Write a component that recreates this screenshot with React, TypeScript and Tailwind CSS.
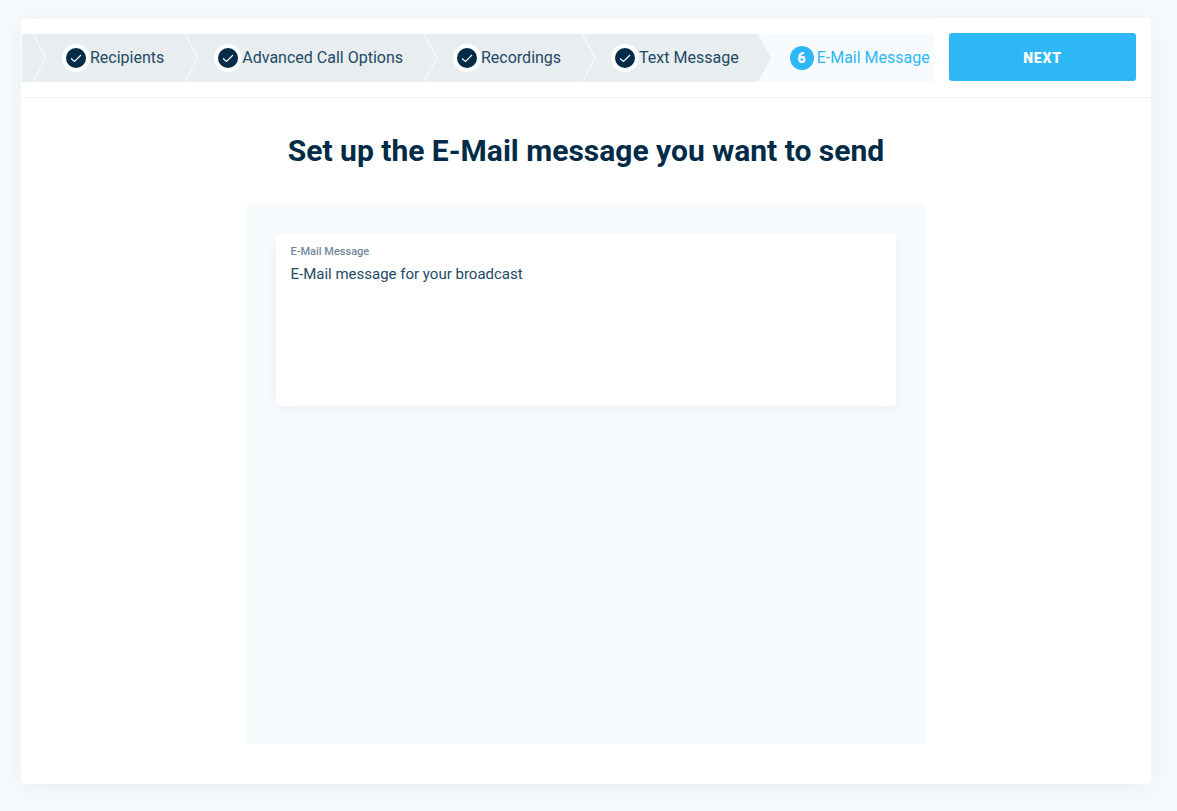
const Chevron = ({ last = false }: { last?: boolean }) => {
  if (last) {
    return (
      <svg width="13" height="48" viewBox="0 0 13 48" className="shrink-0 bg-[#f7fbfe]">
        <polygon points="0,0 13,24 0,48" fill="#e8edf0" />
      </svg>
    );
  }
  return (
    <svg width="13" height="48" viewBox="0 0 13 48" className="shrink-0">
      <polyline points="0,0 13,24 0,48" fill="none" stroke="#ffffff" strokeWidth="1" opacity="0.9" />
    </svg>
  );
};

const DoneStep = ({ label, pr }: { label: string; pr: string }) => {
  return (
    <div className={`flex items-center pl-4 ${pr}`}>
      <span className="flex h-7 w-7 shrink-0 items-center justify-center rounded-full border-4 border-white bg-[#012b47]">
        <svg width="12" height="12" viewBox="0 0 12 12" fill="none">
          <path d="M1 6.5 4.5 9.5 11 3" stroke="#ffffff" strokeWidth="1.2" />
        </svg>
      </span>
      <span className="whitespace-nowrap text-base text-[#234a66]">{label}</span>
    </div>
  );
};

const App = () => {
  return (
    <div className="h-[811px] overflow-hidden bg-[#f6fafd] pl-[21px] pt-[19px] font-['Roboto',sans-serif]">
      <div className="h-[765px] w-[1130px] rounded-b-[5px] bg-white shadow-[0_4px_24px_rgba(0,43,71,0.06)]">
        <header className="ml-px flex h-[79px] items-start border-b border-[#f0f3f5]">
          <div className="mt-[15px] flex h-12 w-[912px] shrink-0 items-stretch overflow-hidden bg-[#e8edf0]">
            <div className="w-[11px] shrink-0" />
            <Chevron />
            <DoneStep label="Recipients" pr="pr-[21px]" />
            <Chevron />
            <DoneStep label="Advanced Call Options" pr="pr-[21px]" />
            <Chevron />
            <DoneStep label="Recordings" pr="pr-[21px]" />
            <Chevron />
            <DoneStep label="Text Message" pr="pr-[19px]" />
            <Chevron last />
            <div className="flex flex-1 items-center gap-[3px] bg-[#f7fbfe] pl-[19px]">
              <span className="flex h-6 w-6 shrink-0 items-center justify-center rounded-full bg-[#2db7f5] text-sm font-black text-white">
                6
              </span>
              <span className="whitespace-nowrap text-base text-[#2db7f5]">E-Mail Message</span>
            </div>
          </div>
          <div className="relative -mt-px h-[79px] flex-1 rounded-tr-[5px] bg-white pl-[15px] pr-[15px] pt-[15px]">
            <button className="h-12 w-full rounded-[3px] bg-[#2db7f5] pt-px text-sm font-black tracking-[0.8px] text-white">
              NEXT
            </button>
          </div>
        </header>
        <main className="flex flex-col items-center">
          <h1 className="mt-[33px] text-[30px] font-bold leading-10 text-[#012b47]">
            Set up the E-Mail message you want to send
          </h1>
          <section className="mt-[33px] h-[540px] w-[680px] bg-[#f7fbfe] p-[30px]">
            <div className="h-[172px] rounded-[4px] bg-white pl-[14.5px] pr-[15px] pt-[11px] shadow-[0_4px_16px_rgba(0,43,71,0.05)]">
              <div className="text-[11px] font-medium leading-[13px] text-[#72889a]">E-Mail Message</div>
              <div className="mt-[6px] text-[15px] leading-5 text-[#234a66]">E-Mail message for your broadcast</div>
            </div>
          </section>
        </main>
      </div>
    </div>
  );
};

export default App;
